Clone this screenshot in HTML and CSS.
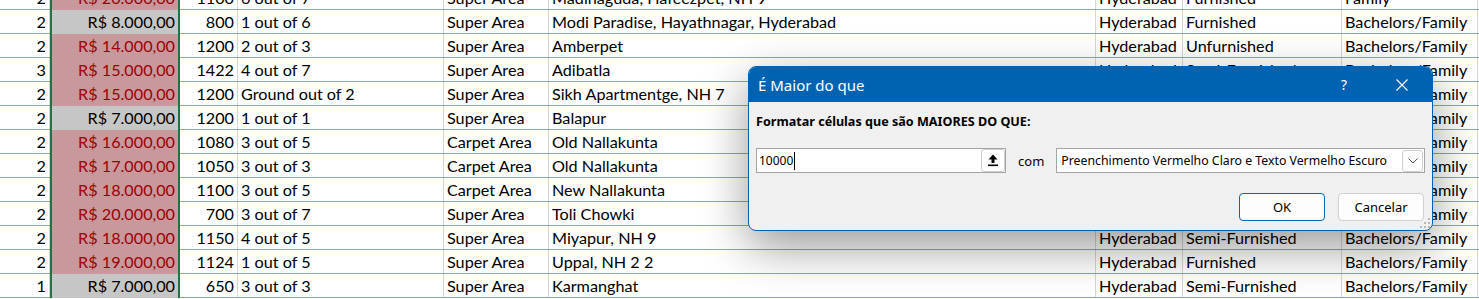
FILE: index.html
```html
<!DOCTYPE html>
<html lang="pt-BR">
<head>
    <meta charset="UTF-8">
    <title>É Maior do que</title>
    <link rel="stylesheet" href="styles.css">
</head>
<body>

<div class="sheet">
    <div class="row">
        <div class="cell num">2</div><div class="cell money hi">R$ 20.000,00</div><div class="cell num">1100</div><div class="cell">6 out of 7</div><div class="cell">Super Area</div><div class="cell">Madinaguda, Hafeezpet, NH 9</div><div class="cell">Hyderabad</div><div class="cell">Furnished</div><div class="cell">Family</div><div class="cell"></div>
    </div>
    <div class="row">
        <div class="cell num">2</div><div class="cell money lo">R$ 8.000,00</div><div class="cell num">800</div><div class="cell">1 out of 6</div><div class="cell">Super Area</div><div class="cell">Modi Paradise, Hayathnagar, Hyderabad</div><div class="cell">Hyderabad</div><div class="cell">Furnished</div><div class="cell">Bachelors/Family</div><div class="cell"></div>
    </div>
    <div class="row">
        <div class="cell num">2</div><div class="cell money hi">R$ 14.000,00</div><div class="cell num">1200</div><div class="cell">2 out of 3</div><div class="cell">Super Area</div><div class="cell">Amberpet</div><div class="cell">Hyderabad</div><div class="cell">Unfurnished</div><div class="cell">Bachelors/Family</div><div class="cell"></div>
    </div>
    <div class="row">
        <div class="cell num">3</div><div class="cell money hi">R$ 15.000,00</div><div class="cell num">1422</div><div class="cell">4 out of 7</div><div class="cell">Super Area</div><div class="cell">Adibatla</div><div class="cell">Hyderabad</div><div class="cell">Semi-Furnished</div><div class="cell">Bachelors/Family</div><div class="cell"></div>
    </div>
    <div class="row">
        <div class="cell num">2</div><div class="cell money hi">R$ 15.000,00</div><div class="cell num">1200</div><div class="cell">Ground out of 2</div><div class="cell">Super Area</div><div class="cell">Sikh Apartmentge, NH 7</div><div class="cell"></div><div class="cell"></div><div class="cell">Bachelors/Family</div><div class="cell"></div>
    </div>
    <div class="row">
        <div class="cell num">2</div><div class="cell money lo">R$ 7.000,00</div><div class="cell num">1200</div><div class="cell">1 out of 1</div><div class="cell">Super Area</div><div class="cell">Balapur</div><div class="cell"></div><div class="cell"></div><div class="cell">Bachelors/Family</div><div class="cell"></div>
    </div>
    <div class="row">
        <div class="cell num">2</div><div class="cell money hi">R$ 16.000,00</div><div class="cell num">1080</div><div class="cell">3 out of 5</div><div class="cell">Carpet Area</div><div class="cell">Old Nallakunta</div><div class="cell"></div><div class="cell"></div><div class="cell">Bachelors/Family</div><div class="cell"></div>
    </div>
    <div class="row">
        <div class="cell num">2</div><div class="cell money hi">R$ 17.000,00</div><div class="cell num">1050</div><div class="cell">3 out of 3</div><div class="cell">Carpet Area</div><div class="cell">Old Nallakunta</div><div class="cell"></div><div class="cell"></div><div class="cell">Bachelors/Family</div><div class="cell"></div>
    </div>
    <div class="row">
        <div class="cell num">2</div><div class="cell money hi">R$ 18.000,00</div><div class="cell num">1100</div><div class="cell">3 out of 5</div><div class="cell">Carpet Area</div><div class="cell">New Nallakunta</div><div class="cell"></div><div class="cell"></div><div class="cell">Bachelors/Family</div><div class="cell"></div>
    </div>
    <div class="row">
        <div class="cell num">2</div><div class="cell money hi">R$ 20.000,00</div><div class="cell num">700</div><div class="cell">3 out of 7</div><div class="cell">Super Area</div><div class="cell">Toli Chowki</div><div class="cell"></div><div class="cell"></div><div class="cell">Bachelors/Family</div><div class="cell"></div>
    </div>
    <div class="row">
        <div class="cell num">2</div><div class="cell money hi">R$ 18.000,00</div><div class="cell num">1150</div><div class="cell">4 out of 5</div><div class="cell">Super Area</div><div class="cell">Miyapur, NH 9</div><div class="cell">Hyderabad</div><div class="cell">Semi-Furnished</div><div class="cell">Bachelors/Family</div><div class="cell"></div>
    </div>
    <div class="row">
        <div class="cell num">2</div><div class="cell money hi">R$ 19.000,00</div><div class="cell num">1124</div><div class="cell">1 out of 5</div><div class="cell">Super Area</div><div class="cell">Uppal, NH 2 2</div><div class="cell">Hyderabad</div><div class="cell">Furnished</div><div class="cell">Bachelors/Family</div><div class="cell"></div>
    </div>
    <div class="row">
        <div class="cell num">1</div><div class="cell money lo">R$ 7.000,00</div><div class="cell num">650</div><div class="cell">3 out of 3</div><div class="cell">Super Area</div><div class="cell">Karmanghat</div><div class="cell">Hyderabad</div><div class="cell">Semi-Furnished</div><div class="cell">Bachelors/Family</div><div class="cell"></div>
    </div>
</div>

<div class="dialog">
    <div class="titlebar">
        <span class="title">É Maior do que</span>
        <span class="help">?</span>
        <span class="close">
            <svg width="12" height="12" viewBox="0 0 12 12"><path d="M0.5 0.5 L11.5 11.5 M11.5 0.5 L0.5 11.5" stroke="#fff" stroke-width="1.1" fill="none"/></svg>
        </span>
    </div>
    <div class="dialog-body">
        <div class="label">Formatar células que são MAIORES DO QUE:</div>
        <div class="fields">
            <div class="input">
                <span class="value">10000</span><span class="caret"></span>
                <span class="ref-btn">
                    <svg width="10" height="13" viewBox="0 0 10 13"><path d="M5 0.5 L9.5 5.5 L6.5 5.5 L6.5 9 L3.5 9 L3.5 5.5 L0.5 5.5 Z" fill="#000"/><rect x="0" y="10.5" width="10" height="1.6" fill="#000"/></svg>
                </span>
            </div>
            <span class="com">com</span>
            <div class="select">
                <span class="value">Preenchimento Vermelho Claro e Texto Vermelho Escuro</span>
                <span class="drop-btn">
                    <svg width="10" height="6" viewBox="0 0 10 6"><path d="M0.5 0.5 L5 5 L9.5 0.5" stroke="#555" stroke-width="1" fill="none"/></svg>
                </span>
            </div>
        </div>
        <div class="buttons">
            <button class="btn btn-primary">OK</button>
            <button class="btn">Cancelar</button>
        </div>
        <svg class="grip" width="11" height="11" viewBox="0 0 11 11">
            <rect x="8" y="0" width="2" height="2" fill="#b8b8b8"/>
            <rect x="4" y="4" width="2" height="2" fill="#b8b8b8"/>
            <rect x="8" y="4" width="2" height="2" fill="#b8b8b8"/>
            <rect x="0" y="8" width="2" height="2" fill="#b8b8b8"/>
            <rect x="4" y="8" width="2" height="2" fill="#b8b8b8"/>
            <rect x="8" y="8" width="2" height="2" fill="#b8b8b8"/>
        </svg>
    </div>
</div>

</body>
</html>
```

FILE: styles.css
```css
body {
    margin: 0;
    padding: 0;
    background-color: #fff;
    overflow: hidden;
    width: 1479px;
    height: 299px;
    position: relative;
}

.sheet {
    margin-top: -14px;
    font-family: 'Lato', sans-serif;
    font-size: 16.2px;
    color: #000;
}

.row {
    display: grid;
    grid-template-columns: 50px 130px 58px 206px 105px 547px 87px 159px 136px 1fr;
    height: 24px;
    border-bottom: 1px solid #8cb56b;
    box-sizing: border-box;
}

.cell {
    display: flex;
    align-items: flex-end;
    padding: 0 3px 1px 3px;
    line-height: 20px;
    border-right: 1px solid #d6d6d6;
    white-space: nowrap;
    overflow: hidden;
    box-sizing: border-box;
}

.cell:last-child {
    border-right: none;
}

.num {
    justify-content: flex-end;
}

.money {
    justify-content: flex-end;
    border-left: 2px solid #217346;
    border-right: 2px solid #217346;
    margin-bottom: -1px;
    padding-bottom: 2px;
}

.hi {
    background-color: #c9989d;
    color: #9c0006;
}

.lo {
    background-color: #c6c6c6;
}

/* dialog */

.dialog {
    position: absolute;
    left: 748px;
    top: 66px;
    width: 685px;
    height: 165px;
    box-sizing: border-box;
    border: 1px solid #0063b1;
    border-radius: 8px;
    background-color: #f0f0f0;
    box-shadow: 0 16px 48px rgba(0, 0, 0, 0.4);
    font-family: 'Noto Sans', sans-serif;
    overflow: hidden;
}

.titlebar {
    display: flex;
    align-items: center;
    height: 35px;
    background-color: #0063b1;
    color: #fff;
    padding-left: 9px;
}

.title {
    flex: 1;
    font-size: 15px;
}

.help {
    font-size: 14px;
    width: 12px;
    margin-right: 43px;
}

.close {
    display: flex;
    margin-right: 24px;
}

.dialog-body {
    position: relative;
    padding: 0 7px;
    height: 128px;
}

.label {
    font-size: 12.6px;
    font-weight: bold;
    color: #000;
    padding-top: 11px;
    line-height: 18px;
}

.fields {
    display: flex;
    align-items: center;
    margin-top: 17px;
    height: 25px;
}

.input {
    display: flex;
    align-items: center;
    width: 251px;
    height: 25px;
    box-sizing: border-box;
    border: 1px solid #a5a5a5;
    background-color: #fff;
    padding-left: 2px;
    font-size: 12px;
}

.caret {
    width: 1px;
    height: 18px;
    background-color: #000;
    margin-left: 1px;
}

.ref-btn {
    margin-left: auto;
    width: 24px;
    height: 23px;
    box-sizing: border-box;
    border: 1px solid #cfcfcf;
    border-radius: 3px;
    background-color: #fff;
    display: flex;
    align-items: center;
    justify-content: center;
}

.com {
    font-size: 13px;
    color: #000;
    margin: 0 12px;
}

.select {
    display: flex;
    align-items: center;
    width: 370px;
    height: 25px;
    box-sizing: border-box;
    border: 1px solid #a5a5a5;
    background-color: #fff;
    padding-left: 4px;
    font-size: 12.3px;
    color: #000;
}

.drop-btn {
    margin-left: auto;
    margin-right: 1px;
    width: 21px;
    height: 22px;
    box-sizing: border-box;
    border: 1px solid #cfcfcf;
    border-radius: 3px;
    background-color: #fdfdfd;
    display: flex;
    align-items: center;
    justify-content: center;
}

.buttons {
    display: flex;
    justify-content: flex-end;
    gap: 13px;
    margin-top: 20px;
    padding-right: 1px;
}

.btn {
    width: 86px;
    height: 28px;
    font-family: 'Noto Sans', sans-serif;
    font-size: 13px;
    color: #000;
    background-color: #fdfdfd;
    border: 1px solid #d0d0d0;
    border-radius: 4px;
}

.btn-primary {
    border-color: #0067c0;
}

.grip {
    position: absolute;
    right: 1px;
    bottom: 1px;
}
```
